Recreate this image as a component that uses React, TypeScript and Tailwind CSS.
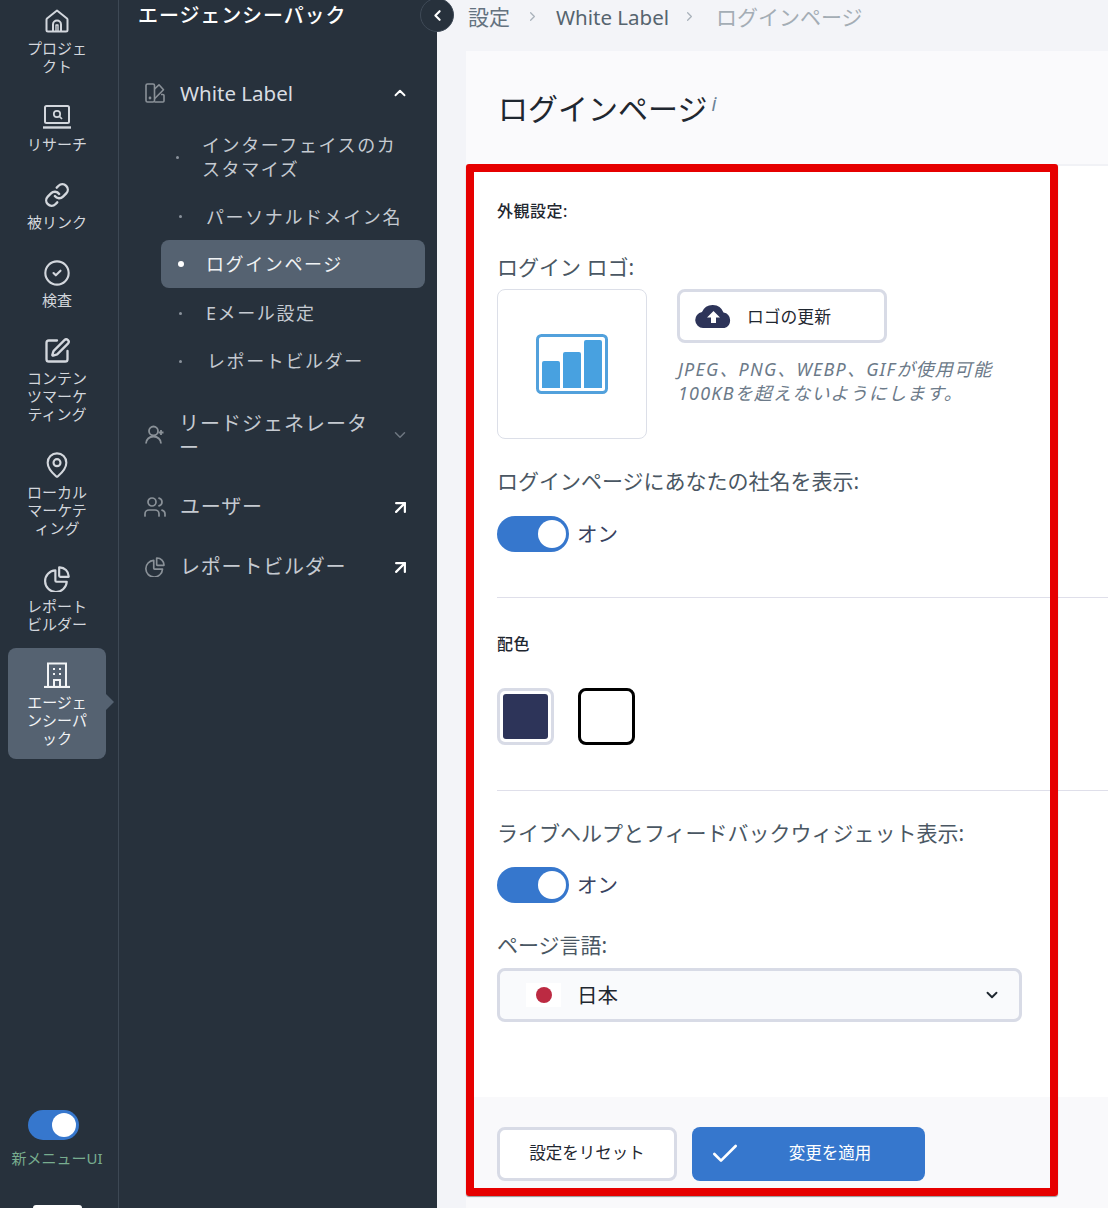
import type { ReactNode } from 'react';
import { ArrowUpRight, Check, ChevronDown, ChevronLeft, ChevronRight, ChevronUp, CircleCheck, Link, SquarePen, MapPin, Users } from 'lucide-react';

function HomeIcon() {
  return (
    <svg width="24" height="24" viewBox="0 0 24 24" fill="none" stroke="currentColor" strokeWidth="2" strokeLinejoin="round">
      <path d="M12 1.500 2 9.500a1.500 1.500 0 0 0-.5 1.200V21a1.500 1.500 0 0 0 1.500 1.500h18a1.500 1.500 0 0 0 1.500-1.500V10.700a1.500 1.500 0 0 0-.5-1.200L12 1.500Z" />
      <path d="M8 22v-6.500a4 4 0 0 1 8 0V22" />
      <path d="M11 22v-6h2v6" strokeWidth="1.400" />
    </svg>
  );
}

function ResearchIcon() {
  return (
    <svg width="28" height="24" viewBox="0 0 28 24" fill="none" stroke="currentColor" strokeWidth="2">
      <rect x="2" y="1" width="24" height="17" rx="1.500" />
      <path d="M0 22.500h28" strokeWidth="2.400" />
      <circle cx="14" cy="9" r="3.200" strokeWidth="1.700" />
      <path d="m16.500 11.500 2.500 2.500" strokeWidth="1.700" />
    </svg>
  );
}

function PieIcon({ size = 24 }: { size?: number }) {
  return (
    <svg width={size} height={size} viewBox="0 0 24 24" fill="none" stroke="currentColor" strokeWidth="2" strokeLinejoin="round">
      <path d="M10.500 4a10 10 0 1 0 10.500 10.500H11.500a1 1 0 0 1-1-1V4Z" />
      <path d="M14.500 1.200a8.500 8.500 0 0 1 8.300 8.300v.5h-7.800a1 1 0 0 1-1-1V1.200h.5Z" />
    </svg>
  );
}

function BuildingIcon() {
  return (
    <svg width="26" height="26" viewBox="0 0 26 26" fill="none" stroke="currentColor" strokeWidth="2">
      <path d="M4 25V1.500h18V25" />
      <path d="M0 25h26" strokeWidth="2.200" />
      <path d="M10 25v-7h6v7" />
      <path d="M9 7h2M15 7h2M9 12h2M15 12h2" />
    </svg>
  );
}

function SwatchIcon() {
  return (
    <svg width="20" height="20" viewBox="0 0 20 20" fill="none" stroke="currentColor" strokeWidth="1.600" strokeLinejoin="round">
      <rect x="1" y="1" width="8.500" height="18" rx="1.500" />
      <path d="M9.500 6 14 1.800l4.500 5-9 9" />
      <path d="M9.500 19H18a1 1 0 0 0 1-1v-5.500a1 1 0 0 0-1-1h-2" />
      <circle cx="5" cy="15" r=".6" fill="currentColor" />
    </svg>
  );
}

function UserAddIcon() {
  return (
    <svg width="21" height="20" viewBox="0 0 21 20" fill="none" stroke="currentColor" strokeWidth="1.800">
      <circle cx="8.500" cy="6" r="4.500" />
      <path d="M1 18.500c0-4 3.300-7 7.500-7s7.500 3 7.500 7" />
      <path d="M16 5v5M13.500 7.500h5" />
    </svg>
  );
}

function CloudIcon() {
  return (
    <svg width="37" height="24" viewBox="0 0 37 24">
      <path d="M8 24a8 8 0 0 1-1-15.900A11.500 11.500 0 0 1 28.500 8.500 8 8 0 0 1 29.500 24Z" fill="#2d3459" />
      <path d="M18.500 7l6.500 6.500h-4V19h-5v-5.500h-4Z" fill="#fff" />
    </svg>
  );
}

const railItems: { label: string; icon: ReactNode }[] = [
  { label: 'プロジェ\nクト', icon: <HomeIcon /> },
  { label: 'リサーチ', icon: <ResearchIcon /> },
  { label: '被リンク', icon: <Link size={26} strokeWidth={2.200} /> },
  { label: '検査', icon: <CircleCheck size={28} strokeWidth={1.800} /> },
  { label: 'コンテン\nツマーケ\nティング', icon: <SquarePen size={28} strokeWidth={2} /> },
  { label: 'ローカル\nマーケテ\nィング', icon: <MapPin size={28} strokeWidth={1.800} /> },
  { label: 'レポート\nビルダー', icon: <PieIcon size={26} /> },
];

const subItems = [
  { label: 'インターフェイスのカ\nスタマイズ', row: 'h-[72px] pl-[15px]', text: 'ml-[23px]' },
  { label: 'パーソナルドメイン名', row: 'h-[47px] pl-[18px]', text: 'ml-[24px]' },
  { label: 'Eメール設定', row: 'mt-[1px] h-[48px] pl-[18px]', text: 'ml-[24px]' },
  { label: 'レポートビルダー', row: 'h-[48px] pl-[18px]', text: 'ml-[25px]' },
];

function Toggle({ small }: { small?: boolean }) {
  return (
    <span className={`flex items-center justify-end rounded-full bg-[#3677cd] ${small ? 'mr-[8px] h-[30px] w-[51px] pr-[3px]' : 'h-[36px] w-[72px] pr-[3px]'}`}>
      <span className={`rounded-full bg-white ${small ? 'h-[24px] w-[24px]' : 'h-[28px] w-[28px]'}`} />
    </span>
  );
}

function SubRow({ item }: { item: (typeof subItems)[number] }) {
  return (
    <div className={`ml-[42px] flex w-[264px] items-center ${item.row}`}>
      <span className="h-[3px] w-[3px] rounded-full bg-[#8a929b]" />
      <span className={`whitespace-pre-line text-[18px] leading-[24px] tracking-[1.600px] text-[#c5cad1] ${item.text}`}>
        {item.label}
      </span>
    </div>
  );
}

function Label({ children, className }: { children: ReactNode; className: string }) {
  return <div className={`h-[30px] text-[21px] leading-[31px] text-[#4a5763] ${className}`}>{children}</div>;
}

function Heading({ children, className }: { children: ReactNode; className: string }) {
  return <div className={`h-[20px] text-[16px] font-medium leading-[21px] tracking-[0.500px] text-[#1f2730] ${className}`}>{children}</div>;
}

export default function App() {
  return (
    <div className="relative flex h-[1208px] w-[1108px] overflow-hidden bg-[#f3f4f8] font-['Noto_Sans','Noto_Sans_CJK_JP',sans-serif]">
      {/* icon rail */}
      <aside className="flex h-full w-[119px] shrink-0 flex-col border-r border-[#3d4854] bg-[#27313c]">
        <div className="-mt-[6px] flex flex-col">
          {railItems.map((item) => (
            <div key={item.label} className="flex w-[114px] flex-col items-center py-[15px] text-[#d3d7dd]">
              <div className="flex h-[24px] items-center justify-center">{item.icon}</div>
              <div className="mt-[6px] whitespace-pre-line text-center text-[15px] leading-[18px]">{item.label}</div>
            </div>
          ))}
          <div className="relative ml-[8px] flex w-[98px] flex-col items-center rounded-lg bg-[#556271] pb-[12px] pt-[15px] text-[#f1f3f5]">
            <div className="flex h-[24px] items-center justify-center"><BuildingIcon /></div>
            <div className="mt-[6px] whitespace-pre-line text-center text-[15px] leading-[18px]">{'エージェ\nンシーパ\nック'}</div>
            <span className="absolute -right-[8px] top-[46px] h-0 w-0 border-y-[8px] border-l-[8px] border-y-transparent border-l-[#556271]" />
          </div>
        </div>
        <div className="mt-auto flex w-[114px] flex-col items-center">
          <Toggle small />
          <div className="mt-[9px] text-[15px] leading-[18px] text-[#78ad8f]">新メニューUI</div>
          <div className="mt-[38px] h-[3px] w-[49px] rounded-t-lg bg-white" />
        </div>
      </aside>

      {/* section nav */}
      <nav className="h-full w-[318px] shrink-0 bg-[#27313c]">
        <div className="h-[30px] pl-[19px] text-[20px] font-medium leading-[31px] tracking-[0.900px] text-white">エージェンシーパック</div>

        <div className="mt-[39px] flex h-[48px] items-center pl-[26px] pr-[28px]">
          <span className="text-[#8a9198]"><SwatchIcon /></span>
          <span className="ml-[15px] mt-[1px] text-[20.500px] text-[#d9dde2]">White Label</span>
          <ChevronUp size={18} strokeWidth={2.500} className="ml-auto text-white" />
        </div>

        <div className="mt-[4px]">
          <SubRow item={subItems[0]} />
          <SubRow item={subItems[1]} />
          <div className="ml-[42px] flex h-[48px] w-[264px] items-center rounded-lg bg-[#556271] pl-[17px]">
            <span className="h-[6px] w-[6px] rounded-full bg-white" />
            <span className="ml-[22px] text-[18px] tracking-[1.600px] text-[#f1f3f5]">ログインページ</span>
          </div>
          <SubRow item={subItems[2]} />
          <SubRow item={subItems[3]} />
        </div>

        <div className="mt-[14px] flex h-[72px] items-center pl-[26px] pr-[28px]">
          <span className="text-[#8a9198]"><UserAddIcon /></span>
          <span className="ml-[13px] mt-[2px] whitespace-pre-line text-[20px] leading-[24px] tracking-[1px] text-[#c5cad1]">{'リードジェネレータ\nー'}</span>
          <ChevronDown size={18} strokeWidth={2} className="ml-auto text-[#6e7781]" />
        </div>
        <div className="mt-[12px] flex h-[48px] items-center pl-[24px] pr-[28px]">
          <Users size={24} strokeWidth={1.700} className="text-[#8a9198]" />
          <span className="ml-[13px] text-[20px] tracking-[0.800px] text-[#c5cad1]">ユーザー</span>
          <ArrowUpRight size={21} strokeWidth={2.500} className="ml-auto -mr-[2px] text-white" />
        </div>
        <div className="mt-[12px] flex h-[48px] items-center pl-[26px] pr-[28px] text-[#8a9198]">
          <PieIcon size={20} />
          <span className="ml-[15px] text-[20px] tracking-[0.800px] text-[#c5cad1]">レポートビルダー</span>
          <ArrowUpRight size={21} strokeWidth={2.500} className="ml-auto -mr-[2px] text-white" />
        </div>
      </nav>

      {/* main */}
      <main className="relative min-w-0 flex-1 pl-[29px]">
        <div className="flex h-[51px] items-start pl-[2px] text-[21px] leading-[34px]">
          <span className="text-[#64727f]">設定</span>
          <ChevronRight size={15} className="ml-[15px] mt-[9px] text-[#a9b2bb]" />
          <span className="ml-[16px] text-[20.500px] text-[#56646f]">White Label</span>
          <ChevronRight size={15} className="ml-[13px] mt-[9px] text-[#a9b2bb]" />
          <span className="ml-[19px] text-[#a4adb5]">ログインページ</span>
        </div>

        <div className="flex h-[115px] items-center border-b-2 border-[#f1f2f6] bg-[#fafafc] pl-[32px]">
          <h1 className="mt-[2px] text-[30px] font-normal leading-[40px] text-[#1f2730]">ログインページ</h1>
          <span className="mb-[6px] ml-[4px] text-[19px] italic text-[#6c8296]">i</span>
        </div>

        <div className="bg-white pl-[31px] pt-[35px]">
          <Heading className="">外観設定:</Heading>
          <Label className="mt-[31px]">ログイン ロゴ:</Label>
          <div className="mt-[7px] flex">
            <div className="flex h-[150px] w-[150px] items-center justify-center rounded-lg border border-[#dcdfe8]">
              <svg width="72" height="60" viewBox="0 0 72 60">
                <rect x="1.500" y="1.500" width="69" height="57" rx="4" fill="none" stroke="#52a1dc" strokeWidth="3" />
                <path d="M6 29a2 2 0 0 1 2-2h14a2 2 0 0 1 2 2v25H6ZM27 20a2 2 0 0 1 2-2h14a2 2 0 0 1 2 2v34H27ZM48 8a2 2 0 0 1 2-2h14a2 2 0 0 1 2 2v46H48Z" fill="#48a1e0" />
              </svg>
            </div>
            <div className="ml-[30px]">
              <div className="flex h-[54px] w-[210px] items-center rounded-lg border-[3px] border-[#d8dbe6] pl-[15px]">
                <CloudIcon />
                <span className="ml-[15px] mt-[2px] text-[16.800px] text-[#1f2730]">ロゴの更新</span>
              </div>
              <p className="ml-[1px] mt-[14px] text-[18px] italic leading-[24px] tracking-[1.200px] text-[#6c7a89]">
                JPEG、PNG、WEBP、GIFが使用可能
                <br />
                100KBを超えないようにします。
              </p>
            </div>
          </div>
          <Label className="mt-[27px]">ログインページにあなたの社名を表示:</Label>
          <div className="mt-[20px] flex items-center">
            <Toggle />
            <span className="ml-[8px] mt-[1px] text-[20.500px] text-[#39425f]">オン</span>
          </div>

          <div className="mt-[45px] h-px bg-[#dfdfea]" />

          <Heading className="mt-[36px]">配色</Heading>
          <div className="mt-[34px] flex">
            <div className="h-[57px] w-[57px] rounded-lg border-[3px] border-[#d8dbe6] p-[3px]">
              <div className="h-full w-full rounded-[3px] bg-[#2d3459]" />
            </div>
            <div className="ml-[24px] h-[57px] w-[57px] rounded-lg border-[3px] border-black" />
          </div>

          <div className="mt-[45px] h-px bg-[#dfdfea]" />

          <Label className="mt-[27px]">ライブヘルプとフィードバックウィジェット表示:</Label>
          <div className="mt-[19px] flex items-center">
            <Toggle />
            <span className="ml-[8px] mt-[1px] text-[20.500px] text-[#39425f]">オン</span>
          </div>
          <Label className="mt-[27px]">ページ言語:</Label>
          <div className="mt-[8px] flex h-[54px] w-[525px] items-center rounded-lg border-[3px] border-[#d8dbe6] bg-[#f9fafc] pl-[26px] pr-[18px]">
            <span className="flex h-[24px] w-[35px] items-center justify-center bg-white">
              <span className="h-[16px] w-[16px] rounded-full bg-[#bc2a42]" />
            </span>
            <span className="ml-[16px] mt-[1px] text-[20.500px] text-[#1f2730]">日本</span>
            <ChevronDown size={18} strokeWidth={2.500} className="ml-auto text-[#1f2730]" />
          </div>
          <div className="h-[75px]" />
        </div>

        <div className="h-[111px] bg-[#f9f9fb] pl-[31px] pt-[30px]">
          <div className="flex">
            <button className="h-[54px] w-[180px] rounded-lg border-[3px] border-[#d8dbe6] bg-white pb-[1px] text-[16.500px] text-[#1f2730]">設定をリセット</button>
            <button className="relative ml-[15px] flex h-[54px] w-[233px] items-center justify-center rounded-lg bg-[#3677cd] pb-[1px] pl-[43px] text-[16.500px] text-white">
              <Check size={32} strokeWidth={2} className="absolute left-[17px] top-[11px]" />
              変更を適用
            </button>
          </div>
        </div>
      </main>

      {/* collapse button sits over the nav edge */}
      <button className="absolute left-[420px] top-[-2px] flex h-[34px] w-[34px] items-center justify-center rounded-full border border-[#3f4a57] bg-[#27313c] text-white">
        <ChevronLeft size={17} strokeWidth={3} />
      </button>

      {/* red annotation frame */}
      <div className="absolute left-[466px] top-[164px] h-[1032px] w-[592px] rounded-[3px] border-[8px] border-[#e60000] shadow-[0_1px_1px_rgba(0,0,0,0.4)]" />
    </div>
  );
}
